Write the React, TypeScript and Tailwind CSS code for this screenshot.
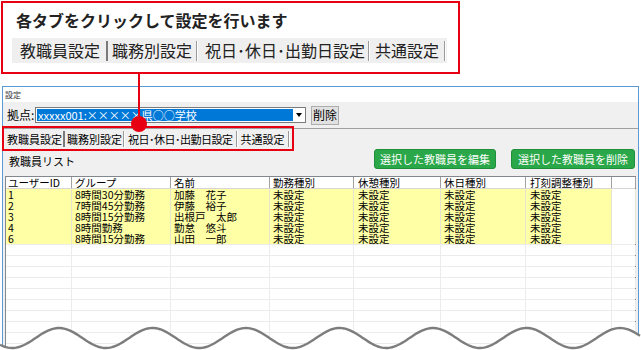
const rows = [
  { id: "1", group: "8時間30分勤務", name: "加藤　花子" },
  { id: "2", group: "7時間45分勤務", name: "伊藤　裕子" },
  { id: "3", group: "8時間15分勤務", name: "出根戸　太郎" },
  { id: "4", group: "8時間勤務", name: "勤怠　悠斗" },
  { id: "6", group: "8時間15分勤務", name: "山田　一郎" },
];

const cols = ["w-[66px]", "w-[99px]", "w-[99px]", "w-[84px]", "w-[87px]", "w-[85px]", "w-[86px]", "w-[24px]"];
const pads = ["pl-[2px]", "pl-[3px]", "pl-[3px]", "pl-[3px]", "pl-[4px]", "pl-[3px]", "pl-[4px]", "pl-0"];
const headers = ["ユーザーID", "グループ", "名前", "勤務種別", "休憩種別", "休日種別", "打刻調整種別", ""];

function wavePath(close: boolean) {
  const pts: string[] = [];
  for (let x = 0; x <= 641; x += 2) {
    const y = 20 - 10 * Math.cos((2 * Math.PI * (x - 59)) / 93.5);
    pts.push(`${x === 0 ? "M" : "L"}${x} ${y.toFixed(2)}`);
  }
  return close ? pts.join(" ") + " L641 40 L0 40 Z" : pts.join(" ");
}

function Sep({ dark = false }: { dark?: boolean }) {
  if (dark) return <div className="h-[80%] w-[2px] bg-[#7a7a7a]" />;
  return <div className="h-[80%] w-[2px] border-l border-r border-l-[#9a9a9a] border-r-white" />;
}

export default function App() {
  return (
    <div className="relative h-[350px] w-[641px] overflow-hidden bg-white font-['Noto_Sans_CJK_JP','Noto_Sans',sans-serif] text-black">
      {/* callout */}
      <div className="ml-[1px] mt-[1px] h-[73px] w-[459px] border-2 border-[#e60012] pl-[9px]">
        <div className="ml-[4px] mt-[9px] text-[16px] font-bold leading-[16px] text-[#222]">
          各タブをクリックして設定を行います
        </div>
        <div className="mt-[10px] flex h-[25px] w-[435px] items-center bg-[#efefef] text-[16px] leading-[25px] text-[#222]">
          <div className="pl-[8px] pr-[6px]">教職員設定</div>
          <Sep dark />
          <div className="pl-[4px] pr-[4px]">職務別設定</div>
          <Sep />
          <div className="pl-[7px] pr-[3px]">祝日･休日･出勤日設定</div>
          <Sep />
          <div className="pl-[5px] pr-[5px]">共通設定</div>
          <Sep />
        </div>
      </div>

      {/* window */}
      <div className="ml-[2px] mt-[12px] h-[300px] w-[637px] border border-[#5b9bd5] bg-[#f0f0f0]">
        <div className="h-[15px] bg-white pl-[2px] text-[8px] leading-[15px] text-[#333]">設定</div>

        <div className="mt-[3px] flex h-[20px] items-center pl-[4px]">
          <div className="w-[28px] text-[12px] leading-[12px]">拠点:</div>
          <div className="flex h-[16px] w-[271px] border border-[#7a7a7a] bg-white p-[1px]">
            <div className="flex-1 overflow-hidden whitespace-nowrap bg-[#0078d7] pl-[1px] text-[11px] leading-[12px] text-white">
              xxxxx001:×××××県○○学校
            </div>
            <div className="flex w-[11px] items-center justify-center">
              <div className="h-0 w-0 border-l-[3px] border-r-[3px] border-t-[4px] border-l-transparent border-r-transparent border-t-black" />
            </div>
          </div>
          <div className="ml-[5px] flex h-[19px] w-[28px] items-center justify-center border border-[#adadad] bg-[#e1e1e1] text-[12px] leading-[12px]">
            削除
          </div>
        </div>

        <div className="mt-[3px] h-[1px] bg-[#a0a0a0]" />

        <div className="flex h-[20px] items-center text-[11px] leading-[20px]">
          <div className="pl-[4px] pr-[1px]">教職員設定</div>
          <Sep dark />
          <div className="pl-[2px] pr-[1px]">職務別設定</div>
          <Sep />
          <div className="pl-[3px] pr-[3px] tracking-[-0.5px]">祝日･休日･出勤日設定</div>
          <Sep />
          <div className="pl-[3px] pr-[3px]">共通設定</div>
          <Sep />
        </div>

        <div className="flex h-[20px]">
          <div className="mb-[2px] self-end pl-[6px] text-[11px] leading-[11px]">教職員リスト</div>
          <div className="ml-auto mr-[3px] flex gap-[15px]">
            <div className="flex h-[20px] w-[122px] items-center justify-center rounded-[3px] border border-[#1f8f3c] bg-[#2aa748] text-[11px] leading-[11px] text-white">
              選択した教職員を編集
            </div>
            <div className="flex h-[20px] w-[124px] items-center justify-center rounded-[3px] border border-[#1f8f3c] bg-[#2aa748] text-[11px] leading-[11px] text-white">
              選択した教職員を削除
            </div>
          </div>
        </div>

        {/* table */}
        <div className="ml-[2px] mt-[7px] w-[631px] border-l border-r border-t border-[#828790] bg-white">
          <div className="flex h-[12px] border-b border-[#d5d5d5] text-[10.5px] leading-[11px]">
            {headers.map((h, i) => (
              <div key={i} className={`${cols[i]} ${pads[i]} shrink-0 whitespace-nowrap border-r border-[#a0a0a0]`}>
                {h}
              </div>
            ))}
          </div>
          {rows.map((r) => {
            const cells = [r.id, r.group, r.name, "未設定", "未設定", "未設定", "未設定", ""];
            return (
              <div key={r.id} className="flex h-[11px] text-[10.5px] leading-[11px]">
                {cells.map((c, i) => (
                  <div
                    key={i}
                    className={`${cols[i]} ${pads[i]} shrink-0 whitespace-nowrap border-r border-[#e4e4d0] ${i < 7 ? "bg-[#ffffa6]" : "bg-white"}`}
                  >
                    {c}
                  </div>
                ))}
              </div>
            );
          })}
          {Array.from({ length: 12 }, (_, k) => (
            <div key={k} className="flex h-[11px] border-t border-[#ececec]">
              {cols.map((w, i) => (
                <div key={i} className={`${w} shrink-0 border-r border-[#ececec]`} />
              ))}
            </div>
          ))}
        </div>
      </div>

      {/* red pointer */}
      <div className="absolute left-[138px] top-[74px] h-[48px] w-[2px] bg-[#e60012]" />
      <div className="absolute left-[131px] top-[116px] h-[16px] w-[16px] rounded-full bg-[#e60012]" />
      <div className="absolute left-[2px] top-[126px] h-[25px] w-[292px] border-2 border-[#e60012]" />

      {/* wave cut */}
      <svg className="absolute left-0 top-[318px]" width="641" height="32" viewBox="0 0 641 32">
        <path d={wavePath(true)} fill="#ffffff" />
        <path d={wavePath(false)} fill="none" stroke="#7d7d7d" strokeWidth="2.4" />
      </svg>
    </div>
  );
}
